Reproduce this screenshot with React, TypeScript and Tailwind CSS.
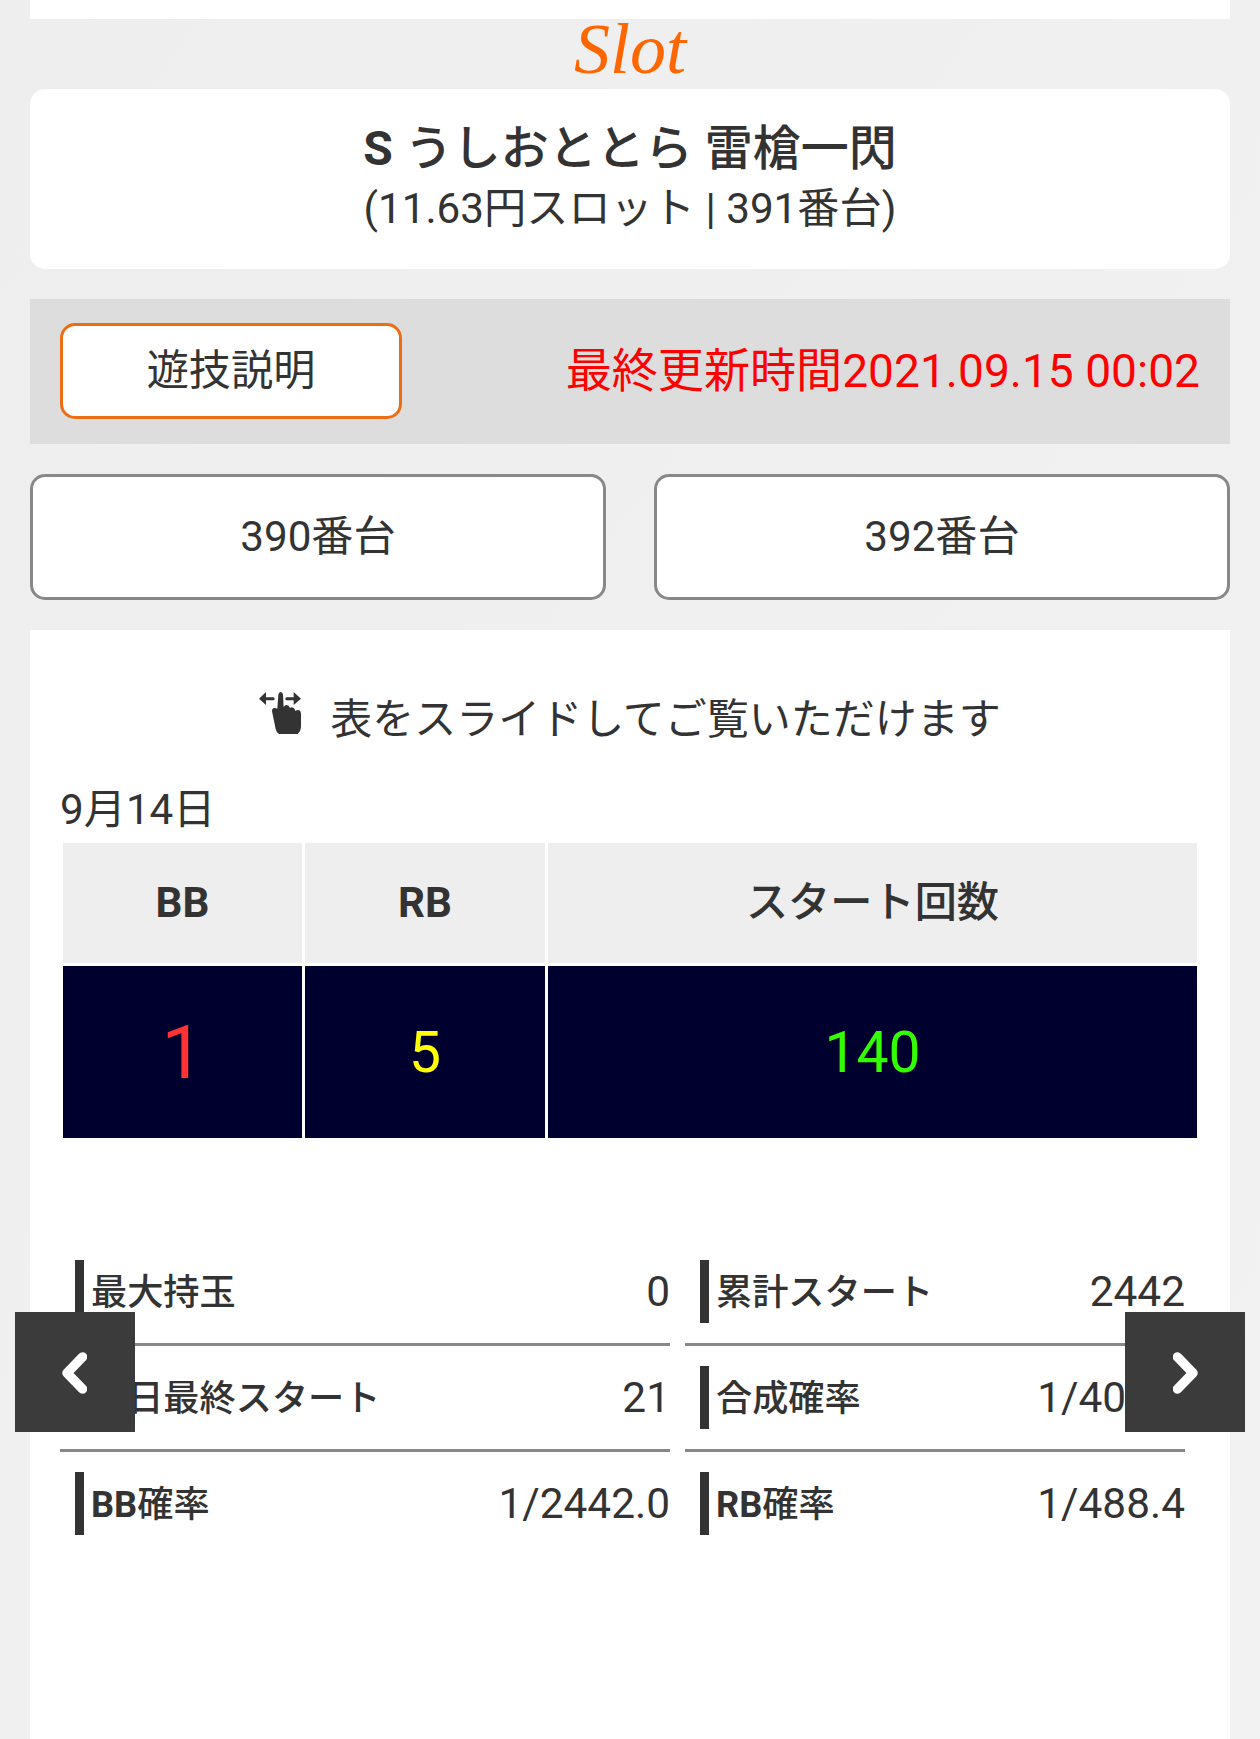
import React from "react";

const sans = "font-['Roboto','Noto_Sans_CJK_JP',sans-serif]";

function SwipeIcon() {
  return (
    <svg viewBox="0 0 126 126" className="-mt-[12px] h-[42px] w-[42px]" fill="#333">
      <path d="M0 20 21 0V15.500H43Q47 15.500 47 20T43 24.500H21V39Z" />
      <path d="M126 20 104 0V15.500H83Q79 15.500 79 20T83 24.500H104V39Z" />
      <path d="M55 50 58 8Q59 0 65 0T72 8L74 45Q77 39 83 39Q90 39 93 48Q97 44 103 47Q108 49 109 57Q115 52 121 55Q126 58 126 66V106Q125 119 116 126H60Q52 122 50 111L39 58Q38 50 44 48Q50 47 55 50Z" />
    </svg>
  );
}

function Chevron({ flip = false }: { flip?: boolean }) {
  return (
    <svg viewBox="0 0 26 42" className={flip ? "mt-[2px] ml-[2px] h-[42px] w-[26px] -scale-x-100" : "mt-[2px] mr-[2px] h-[42px] w-[26px]"} fill="none">
      <path d="M21.5 5 6 21 21.5 37" stroke="#fff" strokeWidth="9.5" strokeLinecap="round" strokeLinejoin="round" />
    </svg>
  );
}

function Stat({ latin = "", label, value, last = false }: { latin?: string; label: string; value: string; last?: boolean }) {
  return (
    <div className={last ? "flex h-[103px] items-center pl-[15px]" : "flex h-[106px] items-center border-b-[3px] border-[#888] pl-[15px]"}>
      <div className="flex h-[63px] items-center border-l-[9px] border-[#333] pt-[2px] pl-[7px] text-[36.2px] leading-[63px] font-medium">
        <span>
          <b className="font-bold">{latin}</b>
          {label}
        </span>
      </div>
      <div className="ml-auto text-[42.4px] leading-[63px]">{value}</div>
    </div>
  );
}

export default function App() {
  return (
    <div className={`relative h-[1739px] w-[1260px] overflow-hidden bg-linear-to-br from-[#eeeeee] to-[#f2f2f2] px-[30px] text-[42.2px] text-[#333] ${sans}`}>
      <div className="h-[19px] bg-white" />
      <h1 className="h-[70px] text-center font-['Liberation_Serif',serif] text-[72px] leading-[61px] text-[#ff6600] italic">Slot</h1>

      <section className="flex h-[180px] flex-col items-center rounded-[15px] bg-white pt-[29px]">
        <h2 className="text-[48px] leading-[62px] font-medium whitespace-nowrap">
          <b className="font-bold">S</b> うしおととら 雷槍一閃
        </h2>
        <p className="leading-[58px] whitespace-nowrap">(11.63円スロット | 391番台)</p>
      </section>

      <section className="mt-[30px] flex h-[145px] items-start justify-between bg-[#ddd] px-[30px] pt-[24px]">
        <button className="h-[96px] w-[342px] rounded-[15px] border-[3px] border-[#ed6d15] bg-white">遊技説明</button>
        <span className="text-[46.1px] leading-[97px] whitespace-nowrap text-[#f00]">最終更新時間2021.09.15 00:02</span>
      </section>

      <nav className="mt-[30px] flex justify-between">
        <button className="h-[126px] w-[576px] rounded-[15px] border-[3px] border-[#888] bg-white pb-px">390番台</button>
        <button className="h-[126px] w-[576px] rounded-[15px] border-[3px] border-[#888] bg-white pb-px">392番台</button>
      </nav>

      <main className="mt-[30px] h-[1109px] bg-white px-[30px] pt-[57px]">
        <div className="flex h-[63px] items-center justify-center gap-[29px]">
          <SwipeIcon />
          <span className="pt-[2px] text-[42px] whitespace-nowrap">表をスライドしてご覧いただけます</span>
        </div>
        <p className="mt-[27px] h-[66px] leading-[65px]">9月14日</p>

        <div className="mx-[3px] grid grid-cols-[239px_240px_649px] grid-rows-[120px_172px] gap-[3px] text-center">
          <div className="flex items-center justify-center bg-[#eee] pb-px font-bold">BB</div>
          <div className="flex items-center justify-center bg-[#eee] pb-px font-bold">RB</div>
          <div className="flex items-center justify-center bg-[#eee] pb-px font-medium">スタート回数</div>
          <div className="flex items-center justify-center bg-[#00002e] text-[75px] text-[#f33]">1</div>
          <div className="flex items-center justify-center bg-[#00002e] pt-[2px] text-[57px] text-[#ff0]">5</div>
          <div className="flex items-center justify-center bg-[#00002e] pt-[2px] text-[57px] text-[#3f0]">140</div>
        </div>

        <div className="mt-[102px] grid grid-cols-[610px_500px] gap-x-[15px]">
          <Stat label="最大持玉" value="0" />
          <Stat label="累計スタート" value="2442" />
          <Stat label="前日最終スタート" value="21" />
          <Stat label="合成確率" value="1/407.0" />
          <Stat latin="BB" label="確率" value="1/2442.0" last />
          <Stat latin="RB" label="確率" value="1/488.4" last />
        </div>
      </main>

      <button className="absolute top-[1312px] left-[15px] flex h-[120px] w-[120px] items-center justify-center bg-[#3b3b3b]">
        <Chevron />
      </button>
      <button className="absolute top-[1312px] right-[15px] flex h-[120px] w-[120px] items-center justify-center bg-[#3b3b3b]">
        <Chevron flip />
      </button>
    </div>
  );
}
